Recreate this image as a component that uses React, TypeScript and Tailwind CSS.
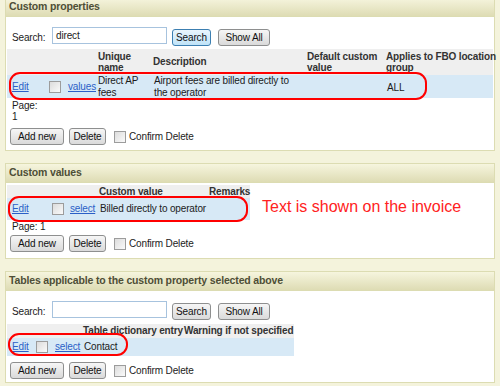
import React from "react";

const Btn: React.FC<{ w: string; hot?: boolean; children: React.ReactNode }> = ({ w, hot, children }) => (
  <button
    className={
      "h-[17px] rounded-[3px] border text-[10px] leading-none text-[#111] " +
      w +
      (hot
        ? " border-[#3c7fb1] bg-linear-to-b from-[#eaf6fd] to-[#bfe3f8]"
        : " border-[#8e8f8f] bg-linear-to-b from-[#f6f6f6] to-[#dadada]")
    }
  >
    {children}
  </button>
);

const Check = () => (
  <span className="inline-block h-[12px] w-[12px] border border-[#9c9c9c] bg-linear-to-br from-[#dcdcdc] to-[#fafafa] align-middle" />
);

const Link: React.FC<{ children: React.ReactNode }> = ({ children }) => (
  <span className="text-[#2b5fc7] underline">{children}</span>
);

const Panel: React.FC<{ title: string; h: string; extra?: string; children: React.ReactNode }> = ({
  title,
  h,
  extra = "",
  children,
}) => (
  <div className={"relative flex flex-col border border-[#dcdcb2] bg-white " + h + " " + extra}>
    <div className="flex h-[19px] shrink-0 items-center border-b border-[#dcdcb2] bg-linear-to-b from-[#f6f5de] to-[#dedcb4] pl-[3px] text-[10.5px] font-bold text-[#4e4e36]">
      {title}
    </div>
    {children}
  </div>
);

const ButtonRow: React.FC<{ mt: string }> = ({ mt }) => (
  <div className={"flex items-center pl-[4px] " + mt}>
    <Btn w="w-[54px]">Add new</Btn>
    <span className="w-[5px]" />
    <Btn w="w-[37px]">Delete</Btn>
    <span className="w-[8px]" />
    <Check />
    <span className="ml-[3px]">Confirm Delete</span>
  </div>
);

const SearchRow: React.FC<{ value: string; hot?: boolean }> = ({ value, hot }) => (
  <div className="flex items-start pt-[10px] pl-[6px]">
    <span className="mt-[3px] w-[40px]">Search:</span>
    <div className="h-[17px] w-[115px] border border-[#a7c3de] bg-white pl-[3px] pt-[1px] leading-[13px]">{value}</div>
    <span className="w-[5px]" />
    <div className="mt-[2px] flex gap-[7px]">
      <Btn w="w-[39px]" hot={hot}>
        Search
      </Btn>
      <Btn w="w-[52px]">Show All</Btn>
    </div>
  </div>
);

const Annot: React.FC<{ cls: string }> = ({ cls }) => (
  <div className={"pointer-events-none absolute rounded-[11px] border-2 border-[#f00] " + cls} />
);

export default function App() {
  return (
    <div className="h-[386px] w-[500px] overflow-hidden bg-[#f4f3dc] px-[5px] font-['Liberation_Sans',Arial,sans-serif] text-[10px] tracking-[-0.15px] text-[#1b1b1b]">
      <div className="flex flex-col gap-[12px]">
        <Panel title="Custom properties" h="h-[154px]" extra="-mt-[3px]">
          <SearchRow value="direct" hot />
          <table className="ml-[1px] mt-[3px] w-[486px] table-fixed border-collapse whitespace-nowrap leading-[11.5px]">
            <colgroup>
              <col className="w-[39px]" />
              <col className="w-[20px]" />
              <col className="w-[30px]" />
              <col className="w-[55px]" />
              <col className="w-[154px]" />
              <col className="w-[79px]" />
              <col />
            </colgroup>
            <tbody>
              <tr className="h-[26px] bg-[#efefef] font-bold text-[#333]">
                <td />
                <td />
                <td />
                <td className="pl-[2px] align-middle">
                  Unique
                  <br />
                  name
                </td>
                <td className="pl-[2px]">Description</td>
                <td className="pl-[2px]">
                  Default custom
                  <br />
                  value
                </td>
                <td className="pl-[2px]">
                  Applies to FBO location
                  <br />
                  group
                </td>
              </tr>
              <tr className="h-[23px] bg-[#d7e9f6]">
                <td className="pl-[5px]">
                  <Link>Edit</Link>
                </td>
                <td className="pl-[3px]">
                  <Check />
                </td>
                <td className="pl-[2px]">
                  <Link>values</Link>
                </td>
                <td className="pl-[2px]">
                  Direct AP
                  <br />
                  fees
                </td>
                <td className="pl-[3px]">
                  Airport fees are billed directly to
                  <br />
                  the operator
                </td>
                <td />
                <td className="pl-[3px] pt-[2px]">ALL</td>
              </tr>
            </tbody>
          </table>
          <div className="pl-[6px] pt-[2px] leading-[11px]">
            Page:
            <br />1
          </div>
          <ButtonRow mt="mt-[6px]" />
          <Annot cls="left-[3px] top-[74px] h-[28px] w-[418px]" />
        </Panel>

        <Panel title="Custom values" h="h-[96px]">
          <table className="ml-[1px] mt-[2px] w-[243px] table-fixed border-collapse whitespace-nowrap leading-[11.5px]">
            <colgroup>
              <col className="w-[41px]" />
              <col className="w-[20px]" />
              <col className="w-[30px]" />
              <col className="w-[110px]" />
              <col />
            </colgroup>
            <tbody>
              <tr className="h-[13px] bg-[#efefef] font-bold text-[#333]">
                <td />
                <td />
                <td />
                <td className="pl-[1px]">Custom value</td>
                <td className="pl-[1px]">Remarks</td>
              </tr>
              <tr className="h-[22px] bg-[#d7e9f6]">
                <td className="pl-[5px]">
                  <Link>Edit</Link>
                </td>
                <td className="pl-[4px]">
                  <Check />
                </td>
                <td className="pl-[2px]">
                  <Link>select</Link>
                </td>
                <td className="pl-[2px]" colSpan={2}>
                  Billed directly to operator
                </td>
              </tr>
            </tbody>
          </table>
          <div className="pl-[6px] pt-[1px] leading-[11px]">Page: 1</div>
          <ButtonRow mt="mt-[3px]" />
          <Annot cls="left-[2px] top-[32px] h-[26px] w-[240px]" />
          <div className="absolute left-[256px] top-[34px] text-[16px] leading-[18px] tracking-normal text-[#f22]">
            Text is shown on the invoice
          </div>
        </Panel>

        <Panel title="Tables applicable to the custom property selected above" h="h-[112px]">
          <SearchRow value="" />
          <table className="ml-[1px] mt-[4px] w-[287px] table-fixed border-collapse whitespace-nowrap leading-[11.5px]">
            <colgroup>
              <col className="w-[25px]" />
              <col className="w-[19px]" />
              <col className="w-[30px]" />
              <col className="w-[102px]" />
              <col />
            </colgroup>
            <tbody>
              <tr className="h-[14px] bg-[#efefef] font-bold text-[#333]">
                <td />
                <td />
                <td />
                <td className="pl-[2px]">Table dictionary entry</td>
                <td className="pl-[1px]">Warning if not specified</td>
              </tr>
              <tr className="h-[18px] bg-[#d7e9f6]">
                <td className="pl-[5px]">
                  <Link>Edit</Link>
                </td>
                <td className="pl-[4px]">
                  <Check />
                </td>
                <td className="pl-[4px]">
                  <Link>select</Link>
                </td>
                <td className="pl-[3px]">Contact</td>
                <td />
              </tr>
            </tbody>
          </table>
          <ButtonRow mt="mt-[6px]" />
          <Annot cls="left-[2px] top-[61px] h-[23px] w-[120px]" />
        </Panel>
      </div>
    </div>
  );
}
